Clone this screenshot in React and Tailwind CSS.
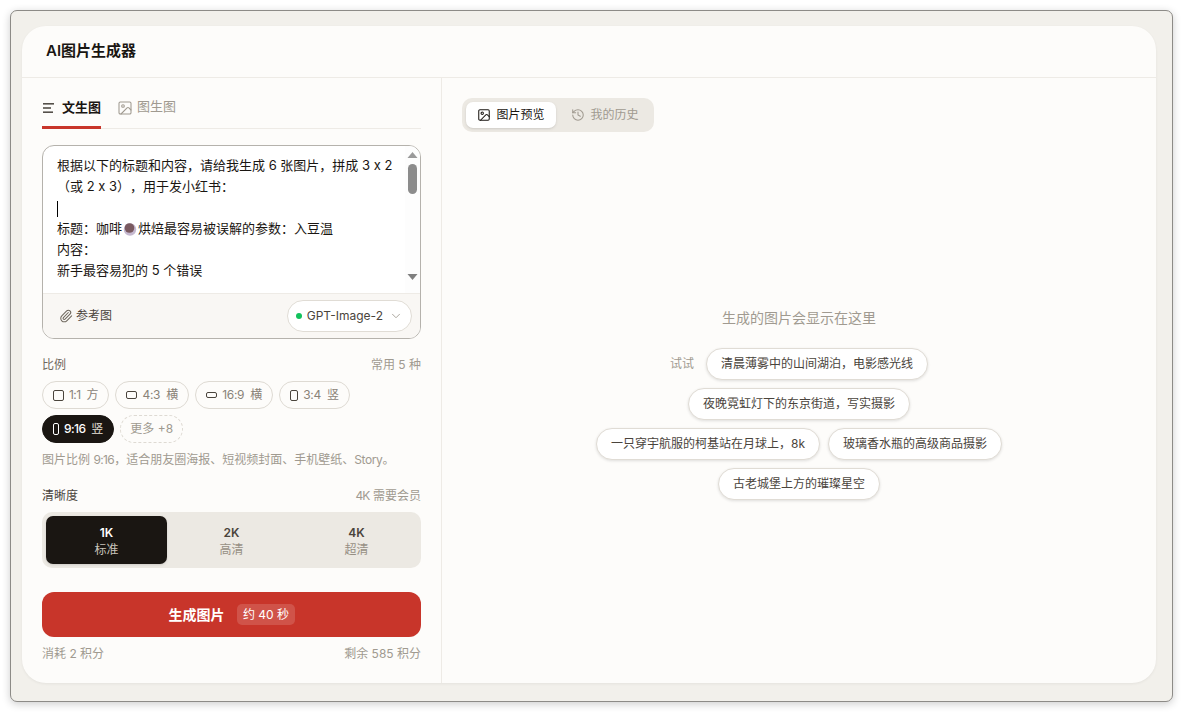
import React from "react";
import { ChevronDown, History, Image as ImageIcon, Paperclip } from "lucide-react";

function Chip({ w, h, a, b, active, tight }) {
  return (
    <div className={active
      ? "flex h-7 items-center rounded-full border border-[#1a1612] bg-[#1a1612] pl-[10px] pr-[10px] text-xs font-medium text-white"
      : "flex h-7 items-center rounded-full border border-[#dedad3] bg-[#fdfcfa] pl-[10px] pr-[10px] text-xs text-[#8a8378]"}>
      <span className={active ? "rounded-[2px] border border-white" : "rounded-[2px] border border-[#4a443c]"} style={{ width: w, height: h }} />
      <span className={tight ? "ml-[5px] tracking-[-0.6px]" : "ml-[5px] tracking-[-0.3px]"}>{a}</span>
      <span className={active ? "ml-[6px] text-[#c9c4bb]" : "ml-[6px]"}>{b}</span>
    </div>
  );
}
function Seg({ k, t, active }) {
  return (
    <div className={active
      ? "flex flex-1 flex-col items-center justify-center rounded-[7px] bg-[#1a1612] pt-[2px] text-white shadow-sm"
      : "flex flex-1 flex-col items-center justify-center pt-[2px] text-[#4a443c]"}>
      <div className="text-xs font-semibold leading-4">{k}</div>
      <div className={active ? "text-xs leading-[17px] text-[#c9c4bb]" : "text-xs leading-[17px] text-[#968f84]"}>{t}</div>
    </div>
  );
}
function Prompt({ children }) {
  return <div className="flex h-8 items-center rounded-full border border-[#e0dcd5] bg-white px-[14px] text-xs text-[#4a443c] shadow-[0_1px_3px_rgba(0,0,0,0.12)]">{children}</div>;
}

export default function App() {
  return (
    <div className="h-[712px] w-[1183px] overflow-hidden bg-white p-[10px] text-[#1a1612] [font-family:Inter,'Noto_Sans_CJK_SC',sans-serif]">
      <div className="h-[692px] w-[1163px] rounded-[7px] border border-[#8d8b87] bg-[#f2f0eb] pb-[16px] pl-[11px] pr-[16px] pt-[15px] shadow-[0_2px_8px_rgba(0,0,0,0.2)]">
        <div className="flex h-[657px] flex-col overflow-hidden rounded-3xl bg-[#fdfcfa] shadow-[0_1px_3px_rgba(0,0,0,0.06)]">
          <div className="flex h-[52px] shrink-0 items-center border-b border-[#eeebe6] pl-6 text-[15px] font-semibold text-[#1a1612]">AI图片生成器</div>
          <div className="flex min-h-0 flex-1">
            <div className="flex w-[420px] shrink-0 flex-col border-r border-[#eeebe6] px-5 pt-5">
              <div className="flex h-[31px] shrink-0 border-b border-[#eeebe6]">
                <div className="-mb-px flex h-[31px] w-[59px] items-start gap-[8px] border-b-[3px] border-[#c8352a] pl-px text-[13px] font-semibold leading-[18px] text-[#1a1612]">
                  <svg width="11" height="10" viewBox="0 0 11 10" className="mt-[5px] shrink-0">
                    <rect x="0" y="0" width="11" height="1.6" fill="#55504a" />
                    <rect x="0" y="4.2" width="8" height="1.6" fill="#55504a" />
                    <rect x="0" y="8.4" width="10" height="1.6" fill="#55504a" />
                  </svg>
                  <span>文生图</span>
                </div>
                <div className="ml-[16px] flex items-start gap-[4px] text-[13px] leading-[18px] text-[#a09a90]">
                  <ImageIcon size={16} strokeWidth={1.6} className="mt-[2px] shrink-0" /><span className="-mt-px">图生图</span>
                </div>
              </div>
              <div className="mt-4 h-[194px] shrink-0 overflow-hidden rounded-[12px] border border-[#b5b2ac] bg-white">
                <div className="relative h-[147px] pl-[14px] pr-[16px] pt-[9px] text-[13px] leading-[21px] text-[#1a1612] [text-spacing-trim:space-all]">
                  <div>根据以下的标题和内容，请给我生成 6 张图片，拼成 3 x 2</div>
                  <div>（或 2 x 3），用于发小红书：</div>
                  <div className="h-[21px]"><span className="mt-[4px] inline-block h-4 w-px bg-black" /></div>
                  <div className="flex items-center">标题：咖啡
                    <svg width="14" height="14" viewBox="0 0 14 14" className="mx-[1px]"><circle cx="7" cy="7.5" r="6.2" fill="#c5b8cf" /><circle cx="6.5" cy="6" r="4.8" fill="#7a5a60" /></svg>
                    烘焙最容易被误解的参数：入豆温</div>
                  <div>内容：</div>
                  <div>新手最容易犯的 5 个错误</div>
                  <div className="absolute bottom-0 right-0 top-0 w-[15px] bg-[#fdfdfd]">
                    <svg width="15" height="147" viewBox="0 0 15 147" className="block">
                      <polygon points="7.5,6 12.5,12 2.5,12" fill="#9a9a9a" />
                      <rect x="3" y="18" width="9" height="30" rx="4.5" fill="#8c8c8c" />
                      <polygon points="7.5,134 12.5,128 2.5,128" fill="#7f7f7f" />
                    </svg>
                  </div>
                </div>
                <div className="flex h-[45px] items-center justify-between border-t border-[#eeebe6] bg-[#f9f7f4] pl-[16px] pr-2">
                  <div className="flex items-center gap-[3px] text-xs text-[#4a443c]">
                    <Paperclip size={14} strokeWidth={1.8} className="text-[#6f685e]" /><span>参考图</span>
                  </div>
                  <div className="flex h-8 items-center rounded-full border border-[#e0dcd5] bg-white pl-2 pr-2 text-xs text-[#4a443c]">
                    <span className="mr-[5px] h-[6px] w-[6px] rounded-full bg-[#12c25c]" />
                    <span>GPT-Image-2</span>
                    <ChevronDown size={14} strokeWidth={1.5} className="ml-[6px] text-[#a09a90]" />
                  </div>
                </div>
              </div>
              <div className="mt-[17px] flex h-[18px] shrink-0 items-center justify-between text-xs">
                <span className="text-[#6f685e]">比例</span><span className="text-[#a09a90]">常用 5 种</span>
              </div>
              <div className="mt-[7px] flex flex-wrap gap-[6px]">
                <Chip w={11} h={11} a="1:1" b="方" tight />
                <Chip w={11} h={8} a="4:3" b="横" />
                <Chip w={11} h={6} a="16:9" b="横" />
                <Chip w={8} h={11} a="3:4" b="竖" />
                <Chip w={6} h={12} a="9:16" b="竖" active tight />
                <div className="flex h-7 items-center rounded-full border border-dashed border-[#dedad3] px-[9px] text-xs text-[#a09a90]">更多 +8</div>
              </div>
              <div className="mt-[8px] h-[18px] shrink-0 text-xs leading-[18px] text-[#a09a90]">图片比例 <span className="tracking-[-0.6px]">9:16</span>，适合朋友圈海报、短视频封面、手机壁纸、<span className="tracking-[-0.4px]">Story</span>。</div>
              <div className="mt-[18px] flex h-[18px] shrink-0 items-center justify-between text-xs">
                <span className="text-[#4a443c]">清晰度</span><span className="text-[#a09a90]"><span className="tracking-[-0.8px]">4K</span> 需要会员</span>
              </div>
              <div className="mt-[7px] flex h-14 shrink-0 gap-1 rounded-[10px] bg-[#ece9e3] p-1">
                <Seg k="1K" t="标准" active />
                <Seg k="2K" t="高清" />
                <Seg k="4K" t="超清" />
              </div>
              <div className="mt-6 flex h-[45px] shrink-0 items-center justify-center gap-[13px] rounded-xl bg-[#c8352a] text-sm font-semibold text-white">
                <span>生成图片</span>
                <span className="flex h-[21px] items-center rounded-[5px] bg-white/15 px-[5.5px] text-xs font-normal text-white">约 40 秒</span>
              </div>
              <div className="mt-[8px] flex h-[18px] shrink-0 items-center justify-between text-xs text-[#a09a90]">
                <span>消耗 2 积分</span><span>剩余 585 积分</span>
              </div>
            </div>
            <div className="flex min-w-0 flex-1 flex-col px-5 pt-5">
              <div className="flex h-[34px] w-[192px] shrink-0 items-center rounded-[10px] bg-[#ece9e3] p-1">
                <div className="flex h-[26px] w-[90px] items-center justify-center gap-[5px] rounded-[7px] bg-white text-xs text-[#1a1612] shadow-sm">
                  <ImageIcon size={14} strokeWidth={1.8} /><span>图片预览</span>
                </div>
                <div className="flex h-[26px] flex-1 items-center justify-center gap-[5px] pl-1 text-xs text-[#a09a90]">
                  <History size={14} strokeWidth={1.8} /><span>我的历史</span>
                </div>
              </div>
              <div className="flex flex-1 flex-col items-center pt-[176px]">
                <div className="text-sm leading-5 text-[#a09a90]">生成的图片会显示在这里</div>
                <div className="mt-5 flex w-[440px] flex-wrap items-center justify-center gap-2">
                  <span className="mr-1 text-xs text-[#a09a90]">试试</span>
                  <Prompt>清晨薄雾中的山间湖泊，电影感光线</Prompt>
                  <Prompt>夜晚霓虹灯下的东京街道，写实摄影</Prompt>
                  <Prompt>一只穿宇航服的柯基站在月球上，8k</Prompt>
                  <Prompt>玻璃香水瓶的高级商品摄影</Prompt>
                  <Prompt>古老城堡上方的璀璨星空</Prompt>
                </div>
              </div>
            </div>
          </div>
        </div>
      </div>
    </div>
  );
}
